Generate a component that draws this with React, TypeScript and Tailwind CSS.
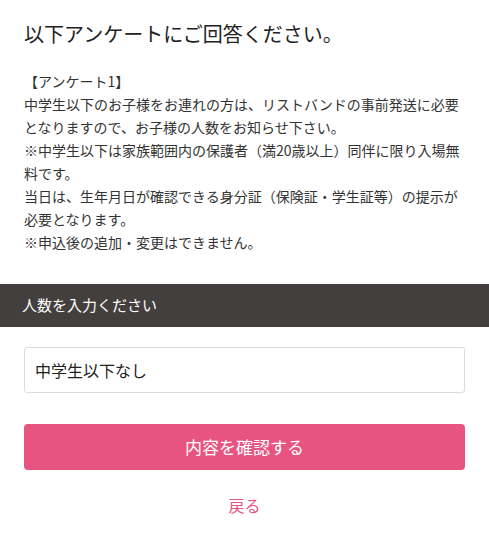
import { useState } from "react";

const notes = [
  "【アンケート1】",
  "中学生以下のお子様をお連れの方は、リストバンドの事前発送に必要となりますので、お子様の人数をお知らせ下さい。",
  "※中学生以下は家族範囲内の保護者（満20歳以上）同伴に限り入場無料です。",
  "当日は、生年月日が確認できる身分証（保険証・学生証等）の提示が必要となります。",
  "※申込後の追加・変更はできません。"
];

export default function App() {
  const [count] = useState("中学生以下なし");

  return (
    <div
      className="min-h-[552px] bg-white text-[#333]"
      style={{ fontFamily: '"Noto Sans CJK JP", "Noto Sans", sans-serif' }}
    >
      <div className="px-6 pt-[20px]">
        <h1 className="text-[20px] leading-[28px] font-normal text-[#222]">
          以下アンケートにご回答ください。
        </h1>
        <div className="mt-[22px] text-[14px] leading-[23px]">
          {notes.map((line, i) => (
            <p key={i}>{line}</p>
          ))}
        </div>
      </div>

      <div className="mt-[30px] flex h-[43px] items-center bg-[#433f3e] px-[22px] text-[15px] text-white">
        人数を入力ください
      </div>

      <div className="px-6 pt-[20px]">
        <div className="flex h-[46px] items-center rounded-[3px] border border-[#dcdcdc] px-[10px] text-[16px] text-[#222]">
          {count}
        </div>

        <button className="mt-[31px] flex h-[46px] w-full items-center justify-center rounded-[4px] bg-[#e85482] text-[17px] text-white">
          内容を確認する
        </button>

        <div className="mt-[23px] text-center text-[16px] text-[#e85482]">
          <a href="#">戻る</a>
        </div>
      </div>
    </div>
  );
}
